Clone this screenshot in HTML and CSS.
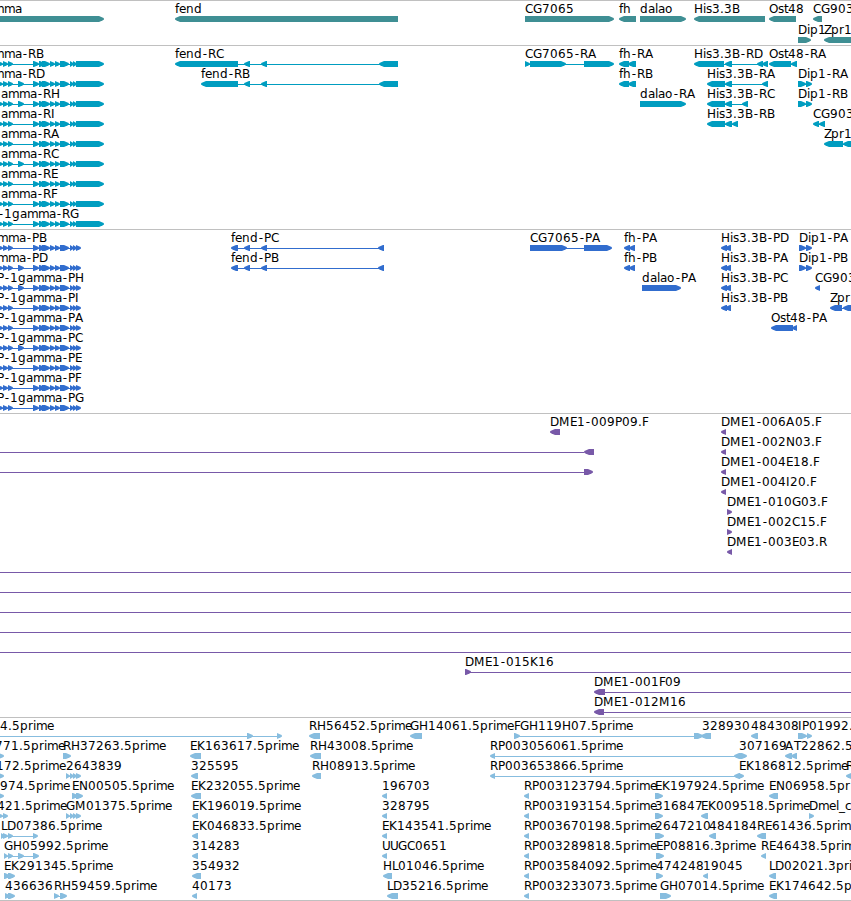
FILE: index.html
```html
<!DOCTYPE html>
<html>
<head>
  <meta charset="utf-8">
  <title>Genome Browser</title>
  <link rel="stylesheet" href="styles.css">
</head>
<body>
  <div class="browser">
    <div class="track genes"><svg id="genes" width="851" height="44"></svg></div>
    <div class="track transcripts"><svg id="transcripts" width="851" height="183"></svg></div>
    <div class="track cds"><svg id="cds" width="851" height="183"></svg></div>
    <div class="track clones"><svg id="clones" width="851" height="303"></svg></div>
    <div class="track ests"><svg id="ests" width="851" height="182"></svg></div>
  </div>
  <script src="tracks.js"></script>
</body>
</html>
```
FILE: styles.css
```css
body {
  margin: 0;
  padding: 0;
  background: #fff;
}

.browser {
  width: 851px;
  overflow: hidden;
  border-bottom: 1px solid #c0c0c0;
}

.track {
  border-top: 1px solid #c0c0c0;
}

.track svg {
  display: block;
}

.track rect {
  shape-rendering: crispEdges;
}

.track text {
  fill: #000;
  font-family: "DejaVu Sans", sans-serif;
  font-size: 12px;
}

.genes {
  fill: #3f8f94;
}

.transcripts {
  fill: #009dc0;
}

.cds {
  fill: #316dce;
}

.clones {
  fill: #7859a8;
}

.ests {
  fill: #87bddf;
}
```
FILE: tracks.js
```js
const NS = 'http://www.w3.org/2000/svg';

// label advance widths in pixels, digits are 8
const WIDTHS = {
  A: 9, B: 8, C: 8, D: 9, E: 7, F: 6, G: 9, H: 9, I: 4, K: 8, L: 6, M: 11,
  N: 9, O: 9, P: 7, R: 8, T: 7, U: 8, Z: 7,
  a: 7, c: 6, d: 8, e: 7, f: 4, g: 8, h: 8, i: 3, l: 3, m: 11, n: 8, o: 8,
  p: 8, r: 5, s: 6, t: 4, '-': 6, '.': 4, _: 6
};

const RNA = '-2,3 3,8 8,13 33,39 39,45 42,50 50,55 55,60 60,69 70,74 73,77 76,104';
const RNA_LONG = RNA.replace('33,39', '18,24 33,39');
const PEP = '-2,3 3,8 8,13 33,39 39,45 42,50 50,55 55,60 60,69 70,74 73,77 76,81';
const PEP_LONG = PEP.replace('33,39', '18,24 33,39');
const QUAD = '66,70 70,74 73,77 76,81';

// [row, label, label x, strand, blocks, line]
const genes = [
  [0, 'mma', -7, '>', '-9,104'],
  [0, 'fend', 175, '<', '175,398'],
  [0, 'CG7065', 525, '>', '525,614'],
  [0, 'fh', 619, '<', '619,636'],
  [0, 'dalao', 640, '>', '640,686'],
  [0, 'His3.3B', 694, '<', '694,765'],
  [0, 'Ost48', 769, '<', '769,796'],
  [0, 'CG903', 813, '<', '813,822'],
  [1, 'Dip1', 798, '>', '798,811'],
  [1, 'Zpr1', 824, '<', '824,860']
];

const transcripts = [
  [0, 'mma-RB', -7, '>', RNA],
  [1, 'mma-RD', -7, '>', RNA_LONG],
  [2, 'amma-RH', 1, '>', RNA_LONG],
  [3, 'amma-RI', 1, '>', RNA],
  [4, 'amma-RA', 1, '>', RNA],
  [5, 'amma-RC', 1, '>', RNA_LONG],
  [6, 'amma-RE', 1, '>', RNA],
  [7, 'amma-RF', 1, '>', RNA],
  [8, '-1gamma-RG', -2, '>', RNA],
  [0, 'fend-RC', 175, '<', '175,238 244,250 261,267 379,398'],
  [1, 'fend-RB', 201, '<', '201,238 244,250 261,267 379,398'],
  [0, 'CG7065-RA', 525, '>', '525,530 530,566 584,614'],
  [0, 'fh-RA', 619, '<', '619,629 628,636'],
  [1, 'fh-RB', 619, '<', '619,629 628,636'],
  [2, 'dalao-RA', 640, '>', '640,686'],
  [0, 'His3.3B-RD', 694, '<', '694,724 725,732 757,763 762,768'],
  [1, 'His3.3B-RA', 707, '<', '707,725 725,732 762,768'],
  [2, 'His3.3B-RC', 707, '<', '707,725 725,732 742,748'],
  [3, 'His3.3B-RB', 707, '<', '707,725 725,732 732,738'],
  [0, 'Ost48-RA', 769, '<', '769,791 791,797'],
  [1, 'Dip1-RA', 798, '>', '798,806 806,812'],
  [2, 'Dip1-RB', 798, '>', '798,806 806,812'],
  [3, 'CG903', 813, '<', '813,819 819,825'],
  [4, 'Zpr1', 824, '<', '824,843 843,860']
];

const cds = [
  [0, 'mma-PB', -3, '>', PEP],
  [1, 'mma-PD', -3, '>', PEP_LONG],
  [2, 'P-1gamma-PH', -3, '>', PEP_LONG],
  [3, 'P-1gamma-PI', -3, '>', PEP],
  [4, 'P-1gamma-PA', -3, '>', PEP],
  [5, 'P-1gamma-PC', -3, '>', PEP_LONG],
  [6, 'P-1gamma-PE', -3, '>', PEP],
  [7, 'P-1gamma-PF', -3, '>', PEP],
  [8, 'P-1gamma-PG', -3, '>', PEP],
  [0, 'fend-PC', 231, '<', '231,238 244,250 261,267 378,384'],
  [1, 'fend-PB', 231, '<', '231,238 244,250 261,267 378,384'],
  [0, 'CG7065-PA', 530, '>', '530,567 584,612'],
  [0, 'fh-PA', 624, '<', '624,630 629,635'],
  [1, 'fh-PB', 624, '<', '624,630 629,635'],
  [2, 'dalao-PA', 642, '>', '642,681'],
  [0, 'His3.3B-PD', 721, '<', '721,727 725,731'],
  [1, 'His3.3B-PA', 721, '<', '721,727 725,731'],
  [2, 'His3.3B-PC', 721, '<', '721,727 725,731'],
  [3, 'His3.3B-PB', 721, '<', '721,727 725,731'],
  [0, 'Dip1-PA', 799, '>', '799,806 806,812'],
  [1, 'Dip1-PB', 799, '>', '799,806 806,812'],
  [2, 'CG903', 815, '<', '815,820'],
  [3, 'Zpr', 830, '<', '830,842 843,860'],
  [4, 'Ost48-PA', 771, '<', '771,793 792,797']
];

const clones = [
  [0, 'DME1-009P09.F', 550, '<', '550,560'],
  [1, '', 0, '<', '584,594', '0,584'],
  [2, '', 0, '>', '584,593', '0,584'],
  [0, 'DME1-006A05.F', 721, '<', '721,726'],
  [1, 'DME1-002N03.F', 721, '<', '721,726'],
  [2, 'DME1-004E18.F', 721, '<', '721,726'],
  [3, 'DME1-004I20.F', 721, '<', '721,726'],
  [4, 'DME1-010G03.F', 727, '>', '727,732'],
  [5, 'DME1-002C15.F', 727, '>', '727,732'],
  [6, 'DME1-003E03.R', 727, '<', '727,732'],
  [7, '', 0, '>', '', '0,851'],
  [8, '', 0, '>', '', '0,851'],
  [9, '', 0, '>', '', '0,851'],
  [10, '', 0, '>', '', '0,851'],
  [11, '', 0, '>', '', '0,851'],
  [12, 'DME1-015K16', 465, '>', '465,471', '465,851'],
  [13, 'DME1-001F09', 594, '<', '594,605', '600,851'],
  [14, 'DME1-012M16', 594, '<', '594,604', '600,851']
];

const ests = [
  [0, '4.5prime', 0, '>', '247,253 277,282', '0,280'],
  [0, 'RH56452.5prime', 309, '<', '309,320'],
  [0, 'GH14061.5prime', 410, '<', '410,422'],
  [0, 'FGH119H07.5prime', 514, '>', '514,520 694,703'],
  [0, '328930', 702, '<', '701,711'],
  [0, '484308', 751, '<', '751,758'],
  [0, 'IP01992.', 798, '>', '798,807 807,812'],
  [1, '771.5prime', -5, '>', '-3,4'],
  [1, 'RH37263.5prime', 63, '>', '63,71'],
  [1, 'EK163617.5prime', 190, '<', '190,201'],
  [1, 'RH43008.5prime', 310, '<', '310,321'],
  [1, 'RP003056061.5prime', 490, '<', '490,495 734,741'],
  [1, '307169', 739, '>', '740,747'],
  [1, 'AT22862.5', 785, '<', '785,792 791,797'],
  [2, '172.5prime', -4, '>', '-3,4'],
  [2, '2643839', 66, '>', QUAD],
  [2, '325595', 191, '<', '191,198'],
  [2, 'RH08913.5prime', 312, '<', '312,321'],
  [2, 'RP003653866.5prime', 490, '<', '490,495 734,740'],
  [2, 'EK186812.5prime', 739, '>', '739,744'],
  [2, 'R', 846, '<', '846,860'],
  [3, '974.5prime', 0, '>', '-3,4'],
  [3, 'EN00505.5prime', 72, '>', '72,78 76,83'],
  [3, 'EK232055.5prime', 191, '<', '191,201'],
  [3, '196703', 382, '<', '382,387'],
  [3, 'RP003123794.5prime', 524, '<', '524,529'],
  [3, 'EK197924.5prime', 655, '>', '655,663'],
  [3, 'EN06958.5pr', 769, '<', '769,778'],
  [4, '421.5prime', -3, '>', '-2,3 3,8'],
  [4, 'GM01375.5prime', 66, '>', QUAD],
  [4, 'EK196019.5prime', 192, '<', '192,198'],
  [4, '328795', 382, '<', '382,387'],
  [4, 'RP003193154.5prime', 524, '<', '524,529'],
  [4, '316847', 655, '>', '655,663'],
  [4, 'EK009518.5prime', 701, '<', '701,708'],
  [4, 'Dmel_c', 809, '>', '809,814'],
  [5, 'LD07386.5prime', 1, '>', '1,5 3,8 8,13 33,38'],
  [5, 'EK046833.5prime', 192, '<', '192,198'],
  [5, 'EK143541.5prime', 382, '<', '382,387'],
  [5, 'RP003670198.5prime', 524, '<', '524,529'],
  [5, '2647210', 655, '>', '655,664'],
  [5, '484184', 709, '<', '709,716'],
  [5, 'RE61436.5prim', 757, '<', '757,766'],
  [6, 'GH05992.5prime', 4, '>', '4,8 8,13 18,24 33,39'],
  [6, '314283', 192, '<', '192,198'],
  [6, 'UUGC0651', 382, '<', '382,387'],
  [6, 'RP003289818.5prime', 524, '<', '524,529'],
  [6, 'EP08816.3prime', 656, '>', '656,664'],
  [6, 'RE46438.5prim', 761, '<', '761,766'],
  [7, 'EK291345.5prime', 4, '>', '4,10 8,15'],
  [7, '354932', 192, '<', '192,201'],
  [7, 'HL01046.5prime', 383, '<', '383,392'],
  [7, 'RP003584092.5prime', 524, '<', '524,529'],
  [7, '474248', 656, '>', '656,663'],
  [7, '19045', 703, '<', '703,708'],
  [7, 'LD02021.3pri', 769, '<', '769,776'],
  [8, '436636', 5, '>', '5,10 8,15'],
  [8, 'RH59459.5prime', 54, '>', '54,59 60,67'],
  [8, '40173', 192, '<', '192,197'],
  [8, 'LD35216.5prime', 387, '<', '387,398'],
  [8, 'RP003233073.5prime', 524, '<', '524,529'],
  [8, 'GH07014.5prime', 660, '>', '660,671'],
  [8, 'EK174642.5p', 769, '<', '769,777']
];

function add(svg, name, attrs) {
  const el = document.createElementNS(NS, name);
  for (const key in attrs) {
    el.setAttribute(key, attrs[key]);
  }
  svg.appendChild(el);
  return el;
}

function drawLabel(svg, label, x, y) {
  let pos = x;
  const xs = [];
  for (const ch of label) {
    xs.push((pos + (ch === '-' ? 0.8 : 0)).toFixed(1));
    pos += WIDTHS[ch] || 8;
  }
  add(svg, 'text', { x: xs.join(' '), y: y }).textContent = label;
}

function drawBlock(svg, a, b, strand, y) {
  const head = Math.min(5, b - a);
  // dir is the step from the flat part towards the tip
  const dir = strand === '>' ? 1 : -1;
  const tip = strand === '>' ? b : a;
  const back = strand === '>' ? a : b;
  const neck = tip - dir * head;
  const mid = tip - dir * 1.5;
  const d = `M${back} ${y}H${neck}L${mid} ${y + 1.6}L${tip} ${y + 2.4}V${y + 3.4}` +
    `L${mid} ${y + 4.4}L${neck} ${y + 6}H${back}Z`;
  add(svg, 'path', { d: d });
}

function drawTrack(id, features, pitch) {
  const svg = document.getElementById(id);
  for (const [row, label, x, strand, blockText, line] of features) {
    const base = 12 + row * pitch;
    const blocks = blockText ? blockText.split(' ').map(b => b.split(',').map(Number)) : [];
    const span = line ? line.split(',').map(Number) : [blocks[0][0] + 2, blocks[blocks.length - 1][1] - 2];
    add(svg, 'rect', { x: span[0], y: base + 6, width: span[1] - span[0], height: 1 });
    for (const [a, b] of blocks) {
      drawBlock(svg, a, b, strand, base + 3);
    }
    if (label) {
      drawLabel(svg, label, x, base);
    }
  }
}

drawTrack('genes', genes, 21);
drawTrack('transcripts', transcripts, 20);
drawTrack('cds', cds, 20);
drawTrack('clones', clones, 20);
drawTrack('ests', ests, 20);
```
